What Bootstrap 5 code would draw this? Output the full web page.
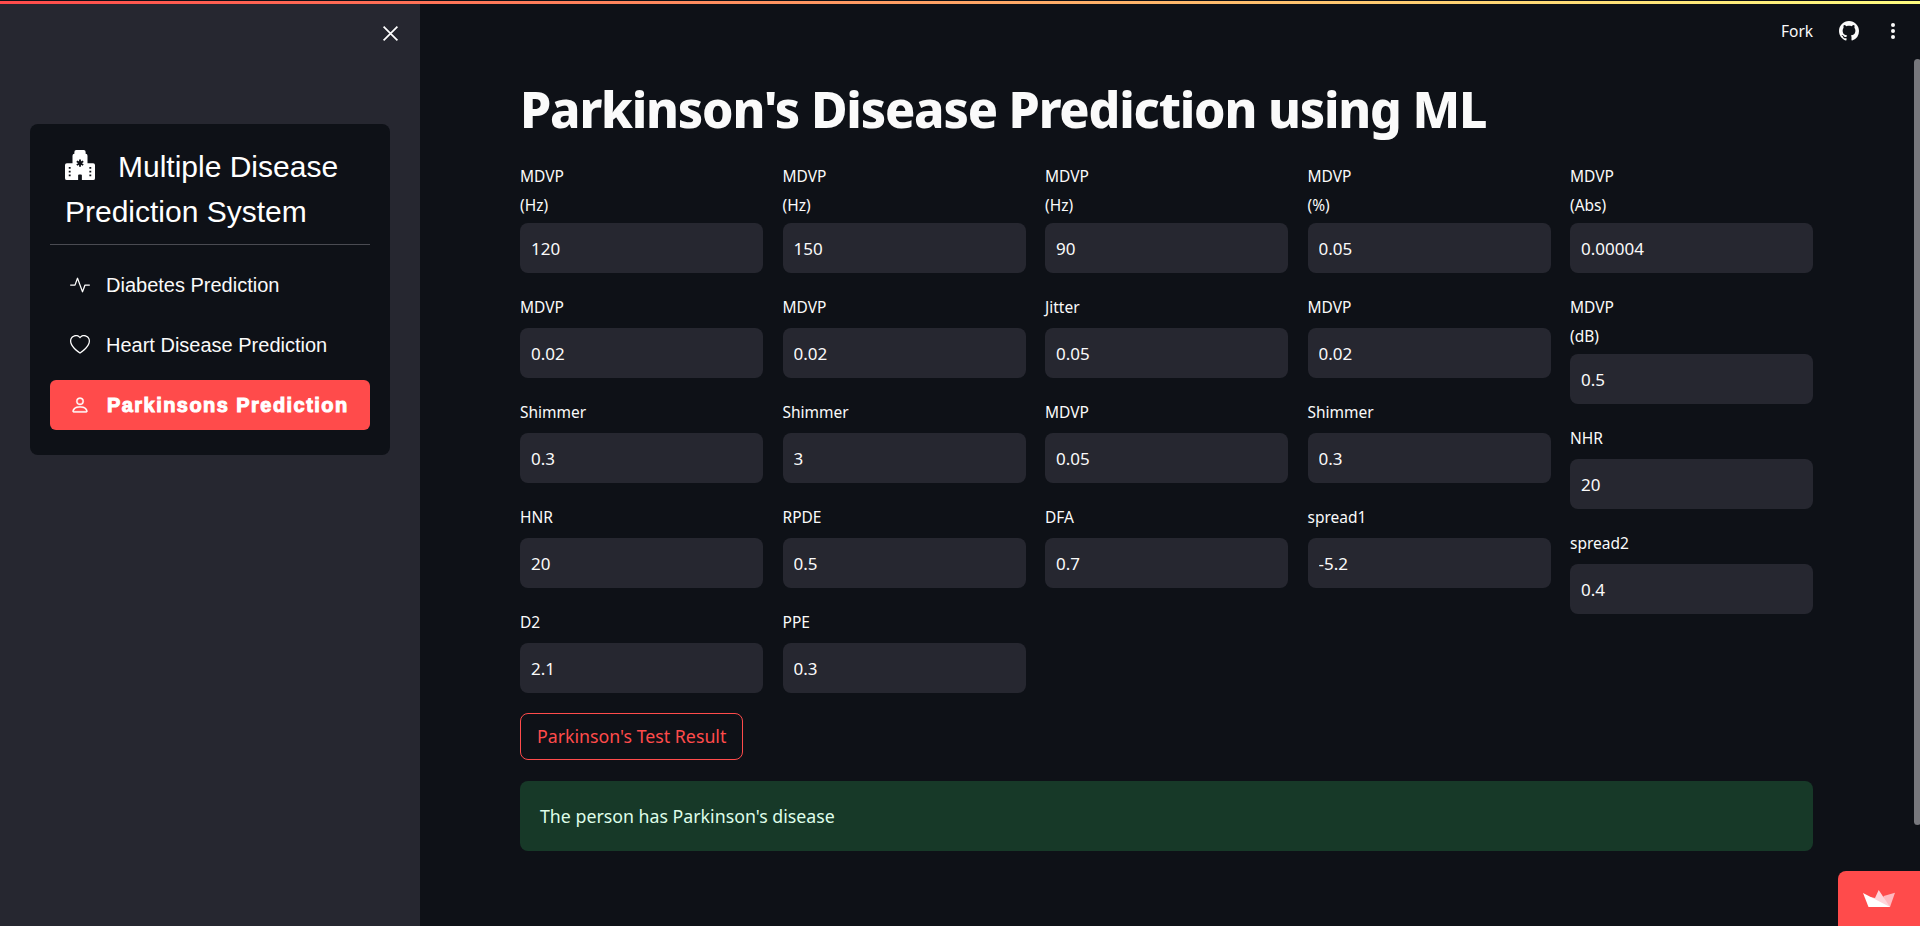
<!DOCTYPE html>
<html lang="en">
<head>
<meta charset="UTF-8">
<title>Parkinson's Disease Prediction using ML</title>
<link href="https://cdn.jsdelivr.net/npm/bootstrap@5.3.0/dist/css/bootstrap.min.css" rel="stylesheet">
<style>
html, body { height: 100%; }
body { background: #0e1117; color: #fafafa; font-family: "Noto Sans", "Open Sans", sans-serif; overflow: hidden; }
.top-line { height: 4px; border-top: 1px solid #0e1117; background: linear-gradient(90deg, #ff4b4b, #fffd80); position: absolute; top: 0; left: 0; right: 0; z-index: 5; }
.shell { height: 926px; }
.side { width: 420px; background: #262730; padding: 124px 30px 0; position: relative; flex-shrink: 0; }
.side-close { position: absolute; left: 382px; top: 25px; width: 17px; height: 17px; }
.side-menu { background: #0e1117; border-radius: 8px; padding: 20px 20px 25px; height: 331px; font-family: "Liberation Sans", Arial, sans-serif; }
.menu-title { font-size: 30px; line-height: 45px; padding-left: 15px; color: #fff; }
.menu-title svg { width: 30px; height: 30px; margin-right: 23px; vertical-align: -3px; }
.menu-rule { height: 1px; background: #4a4b52; margin: 10px 0 15px; }
.menu-link { display: flex; align-items: center; height: 50px; padding-left: 20px; margin-bottom: 10px; border-radius: 6px; color: #fafafa; font-size: 20px; text-decoration: none; }
.menu-link svg { width: 20px; height: 20px; margin-right: 16px; flex-shrink: 0; }
.menu-link.on { background: #ff4b4b; color: #fff; font-weight: 700; margin: 0; -webkit-text-stroke: 1px #fff; letter-spacing: 1.45px; }
.menu-link.on svg { margin-right: 17px; }
.main-area { padding: 0 108px 0 100px; position: relative; }
.page-title { font-size: 50px; font-weight: 800; line-height: 70px; margin: 74px 0 14px; letter-spacing: -1.2px; }
.field-cols { gap: 19.5px; }
.field-col { width: 243px; gap: 16px; }
.field-label { font-size: 15.5px; line-height: 22px; margin: 7px 0 10px; display: block; color: #fafafa; }
.field-label.two-line { margin-bottom: 7px; }
.field-label span { display: block; margin-bottom: 7px; }
.field-input, .field-input:focus { background: #262730; border: 0; border-radius: 8px; height: 50px; color: #fafafa; font-size: 17px; padding: 0 11px; box-shadow: none; font-family: inherit; }
.result-btn, .result-btn:hover { border: 1px solid #ff4b4b; color: #ff4b4b; background: transparent; border-radius: 8px; font-size: 17.75px; height: 47px; padding: 0 16px; margin-top: 20px; }
.result-box { background: #173928; color: #dffde9; border: 0; border-radius: 8px; height: 70px; margin: 21px 0 0; padding: 0 20px; font-size: 17.75px; }
.top-tools { position: absolute; top: 20px; right: 0; width: 200px; height: 22px; }
.fork { position: absolute; left: 60px; font-size: 15.5px; line-height: 22px; }
.tool-git { position: absolute; left: 118px; top: 1px; width: 20px; height: 20px; }
.tool-dots { position: absolute; left: 170px; top: 1px; width: 4px; height: 20px; }
.scroll-thumb { position: absolute; right: 0; top: 59px; width: 7px; height: 766px; background: #77787d; border-radius: 4px; }
.deploy { position: absolute; right: 0; bottom: 0; width: 82px; height: 55px; background: #ff4b4b; border-top-left-radius: 8px; display: flex; align-items: center; justify-content: center; }
</style>
</head>
<body>
<div class="top-line"></div>
<div class="shell d-flex">
  <aside class="side">
    <svg class="side-close" viewBox="0 0 16 16" fill="none" stroke="#fff" stroke-width="1.6"><path d="M1.5 1.5l13 13M14.5 1.5l-13 13"/></svg>
    <div class="side-menu">
      <div class="menu-title">
        <svg viewBox="0 0 16 16" fill="#fff" fill-rule="evenodd"><path d="M6 0a1 1 0 0 0-1 1v1a1 1 0 0 0-1 1v4H1a1 1 0 0 0-1 1v7a1 1 0 0 0 1 1h6v-2.500a.5.500 0 0 1 .5-.5h1a.5.500 0 0 1 .5.500V16h6a1 1 0 0 0 1-1V8a1 1 0 0 0-1-1h-3V3a1 1 0 0 0-1-1V1a1 1 0 0 0-1-1zM8.500 5.034v1.100l.953-.55.5.867L9 7l.953.55-.5.866-.953-.55v1.100h-1v-1.100l-.953.55-.5-.866L7 7l-.953-.55.5-.866.953.55v-1.100zM2 9h1v1H2zM2 11h1v1H2zM2 13h1v1H2zM13 9h1v1h-1zM13 11h1v1h-1zM13 13h1v1h-1z"/></svg>Multiple Disease Prediction System
      </div>
      <div class="menu-rule"></div>
      <a class="menu-link" href="#"><svg viewBox="0 0 16 16" fill="#fff"><path d="M6 2a.5.5 0 0 1 .47.33L10 12.036l1.530-4.208A.5.500 0 0 1 12 7.500h3.500a.5.500 0 0 1 0 1h-3.150l-1.880 5.170a.5.500 0 0 1-.94 0L6 3.964 4.470 8.171A.5.500 0 0 1 4 8.500H.5a.5.500 0 0 1 0-1h3.150l1.880-5.170A.5.500 0 0 1 6 2"/></svg>Diabetes Prediction</a>
      <a class="menu-link" href="#"><svg viewBox="0 0 16 16" fill="#fff"><path d="m8 2.748-.717-.737C5.600.281 2.514.878 1.400 3.053c-.523 1.023-.641 2.500.314 4.385.920 1.815 2.834 3.989 6.286 6.357 3.452-2.368 5.365-4.542 6.286-6.357.955-1.886.838-3.362.314-4.385C13.486.878 10.400.280 8.717 2.010zM8 15C-7.333 4.868 3.279-3.040 7.824 1.143q.09.083.176.171a3 3 0 0 1 .176-.170C12.720-3.042 23.333 4.867 8 15"/></svg>Heart Disease Prediction</a>
      <a class="menu-link on" href="#"><svg viewBox="0 0 16 16" fill="#fff" stroke="#fff" stroke-width=".25"><path d="M8 8a3 3 0 1 0 0-6 3 3 0 0 0 0 6m2-3a2 2 0 1 1-4 0 2 2 0 0 1 4 0m4 8c0 1-1 1-1 1H3s-1 0-1-1 1-4 6-4 6 3 6 4m-1-.004c-.001-.246-.154-.986-.832-1.664C11.516 10.680 10.289 10 8 10s-3.516.68-4.168 1.332c-.678.678-.83 1.418-.832 1.664z"/></svg>Parkinsons Prediction</a>
    </div>
  </aside>
  <main class="main-area flex-grow-1">
    <h1 class="page-title">Parkinson's Disease Prediction using ML</h1>
    <div class="field-cols d-flex align-items-start">
      <div class="field-col d-flex flex-column">
        <div><label class="field-label two-line"><span>MDVP</span>(Hz)</label><input class="form-control field-input" value="120"></div>
        <div><label class="field-label">MDVP</label><input class="form-control field-input" value="0.02"></div>
        <div><label class="field-label">Shimmer</label><input class="form-control field-input" value="0.3"></div>
        <div><label class="field-label">HNR</label><input class="form-control field-input" value="20"></div>
        <div><label class="field-label">D2</label><input class="form-control field-input" value="2.1"></div>
      </div>
      <div class="field-col d-flex flex-column">
        <div><label class="field-label two-line"><span>MDVP</span>(Hz)</label><input class="form-control field-input" value="150"></div>
        <div><label class="field-label">MDVP</label><input class="form-control field-input" value="0.02"></div>
        <div><label class="field-label">Shimmer</label><input class="form-control field-input" value="3"></div>
        <div><label class="field-label">RPDE</label><input class="form-control field-input" value="0.5"></div>
        <div><label class="field-label">PPE</label><input class="form-control field-input" value="0.3"></div>
      </div>
      <div class="field-col d-flex flex-column">
        <div><label class="field-label two-line"><span>MDVP</span>(Hz)</label><input class="form-control field-input" value="90"></div>
        <div><label class="field-label">Jitter</label><input class="form-control field-input" value="0.05"></div>
        <div><label class="field-label">MDVP</label><input class="form-control field-input" value="0.05"></div>
        <div><label class="field-label">DFA</label><input class="form-control field-input" value="0.7"></div>
      </div>
      <div class="field-col d-flex flex-column">
        <div><label class="field-label two-line"><span>MDVP</span>(%)</label><input class="form-control field-input" value="0.05"></div>
        <div><label class="field-label">MDVP</label><input class="form-control field-input" value="0.02"></div>
        <div><label class="field-label">Shimmer</label><input class="form-control field-input" value="0.3"></div>
        <div><label class="field-label">spread1</label><input class="form-control field-input" value="-5.2"></div>
      </div>
      <div class="field-col d-flex flex-column">
        <div><label class="field-label two-line"><span>MDVP</span>(Abs)</label><input class="form-control field-input" value="0.00004"></div>
        <div><label class="field-label two-line"><span>MDVP</span>(dB)</label><input class="form-control field-input" value="0.5"></div>
        <div><label class="field-label">NHR</label><input class="form-control field-input" value="20"></div>
        <div><label class="field-label">spread2</label><input class="form-control field-input" value="0.4"></div>
      </div>
    </div>
    <button class="btn result-btn" type="button">Parkinson's Test Result</button>
    <div class="alert result-box d-flex align-items-center">The person has Parkinson's disease</div>
    <div class="top-tools">
      <span class="fork">Fork</span>
      <svg class="tool-git" viewBox="0 0 16 16" fill="#fafafa"><path d="M8 0C3.580 0 0 3.580 0 8c0 3.540 2.290 6.530 5.470 7.590.4.070.55-.170.55-.380 0-.190-.010-.820-.010-1.490-2.010.370-2.530-.490-2.690-.940-.090-.230-.480-.940-.820-1.130-.280-.150-.680-.520-.010-.530.630-.010 1.080.580 1.230.820.720 1.210 1.870.870 2.330.660.070-.520.280-.870.510-1.070-1.780-.200-3.640-.890-3.640-3.950 0-.870.310-1.590.820-2.150-.080-.200-.360-1.020.080-2.120 0 0 .670-.210 2.200.820.640-.180 1.320-.270 2-.270s1.360.090 2 .270c1.530-1.040 2.200-.820 2.200-.820.440 1.100.160 1.920.080 2.120.510.560.820 1.270.820 2.150 0 3.070-1.870 3.750-3.650 3.950.290.250.540.730.540 1.480 0 1.070-.010 1.930-.010 2.200 0 .210.150.460.550.380A8.010 8.010 0 0 0 16 8c0-4.420-3.580-8-8-8"/></svg>
      <svg class="tool-dots" viewBox="0 0 4 20" fill="#fafafa"><circle cx="2" cy="4" r="2"/><circle cx="2" cy="10" r="2"/><circle cx="2" cy="16" r="2"/></svg>
    </div>
    <div class="scroll-thumb"></div>
  </main>
</div>
<div class="deploy">
  <svg width="32" height="17" viewBox="0 0 32 17"><path d="M32 2.700 27 17H17L20.700 6Z" fill="#ffb9bf"/><path d="M15.700 0 27 17H9L7 7 12 8Z" fill="#ffd5da"/><path d="M0 3 27 17H5.500Z" fill="#fff"/></svg>
</div>
<script src="https://cdn.jsdelivr.net/npm/bootstrap@5.3.0/dist/js/bootstrap.bundle.min.js"></script>
</body>
</html>
